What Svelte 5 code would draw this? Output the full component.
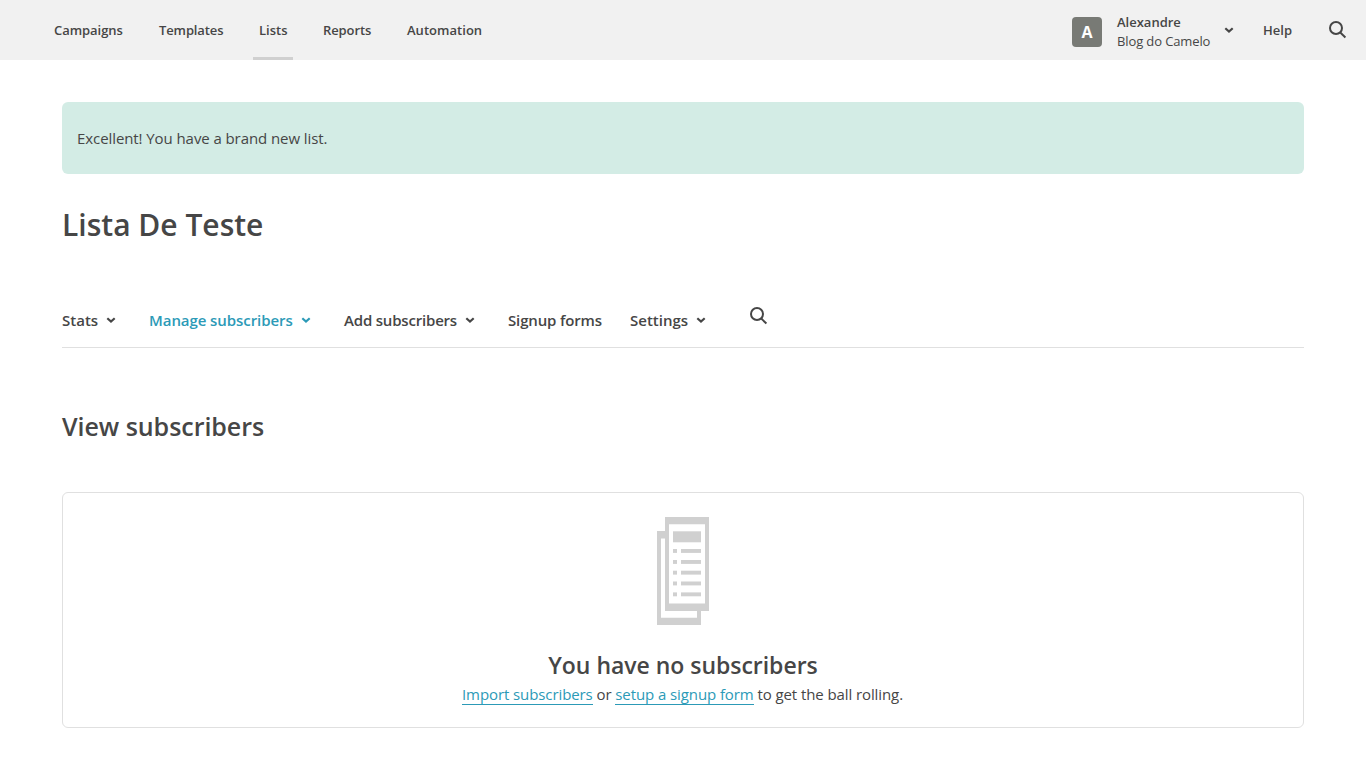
<script>
  const mainNav = [
    { label: 'Campaigns', width: 69, track: -0.05 },
    { label: 'Templates', width: 64, track: -0.12 },
    { label: 'Lists', width: 28, track: 0, active: true },
    { label: 'Reports', width: 48, track: -0.1 },
    { label: 'Automation', width: 75, track: 0.03 }
  ];
  const tabs = [
    { label: 'Stats', width: 36, gap: 33, track: 0, menu: true },
    { label: 'Manage subscribers', width: 144, gap: 33, track: -0.07, menu: true, active: true },
    { label: 'Add subscribers', width: 113, gap: 33, track: -0.19, menu: true },
    { label: 'Signup forms', width: 94, gap: 28, track: -0.15 },
    { label: 'Settings', width: 58, gap: 43, track: 0, menu: true }
  ];
  const rows = [32, 43, 53.7, 64.5, 75.4];
</script>

{#snippet chevron()}
  <svg class="chevron" width="10" height="8" viewBox="0 0 10 8"><path d="M1.3 2.2 L5 5.5 L8.7 2.2" /></svg>
{/snippet}

{#snippet magnifier()}
  <svg class="magnifier" width="20" height="20" viewBox="0 0 20 20">
    <circle cx="8" cy="8" r="6" /><path d="M12.3 12.6 L17.4 17.4" />
  </svg>
{/snippet}

<header>
  <nav class="main-nav">
    {#each mainNav as item}
      <a href="#top" class:active={item.active}><span style="width: {item.width}px; letter-spacing: {item.track}px">{item.label}</span></a>
    {/each}
  </nav>
  <div class="account">
    <div class="avatar">A</div>
    <div class="names"><strong>Alexandre</strong><span>Blog do Camelo</span></div>
    {@render chevron()}
    <a class="help" href="#help">Help</a>
    {@render magnifier()}
  </div>
</header>

<main>
  <div class="notice">Excellent! You have a brand new list.</div>
  <h1>Lista De Teste</h1>
  <nav class="tabs">
    {#each tabs as tab}
      <a href="#tab" class:active={tab.active} style="margin-right: {tab.gap}px">
        <span style="width: {tab.width}px; letter-spacing: {tab.track}px">{tab.label}</span>
        {#if tab.menu}{@render chevron()}{/if}
      </a>
    {/each}
    {@render magnifier()}
  </nav>
  <h2>View subscribers</h2>
  <section class="empty">
    <svg class="pages" width="52" height="108" viewBox="0 0 52 108" fill="#d0d0d0">
      <path d="M0 14 H8 V21.5 H4 V100.8 H40 V94 H44 V108 H0 Z" />
      <path fill-rule="evenodd" d="M8 0 H52 V94 H8 Z M12 7.2 V86.4 H48 V7.2 Z" />
      <rect x="16" y="14.3" width="28" height="11" />
      {#each rows as y}
        <rect x="16" {y} width="4" height="3.9" />
        <rect x="24" {y} width="20" height="3.9" />
      {/each}
    </svg>
    <h3>You have no subscribers</h3>
    <p><a href="#import">Import subscribers</a> or <a href="#form">setup a signup form</a> to get the ball rolling.</p>
  </section>
</main>

<style>
  :global(body) { margin: 0; background: #fff; overflow: hidden; }
  header, main { font-family: "Open Sans", sans-serif; color: #464646; }
  a { color: inherit; text-decoration: none; }
  header {
    box-sizing: border-box; height: 60px; background: #f1f1f1;
    display: flex; justify-content: space-between; padding: 0 18px 0 48px;
    font-size: 13px; font-weight: 600;
  }
  .main-nav { display: flex; gap: 24px; }
  .main-nav a { box-sizing: border-box; height: 60px; padding: 0 6px; line-height: 60px; border-bottom: 3px solid transparent; }
  .main-nav a.active { border-color: #d0d0d0; }
  .main-nav span, .tabs span { display: inline-block; white-space: nowrap; }
  .account { display: flex; align-items: center; height: 60px; }
  .avatar {
    width: 30px; height: 30px; margin: 4px 15px 0 0; border-radius: 4px;
    background: #787a75; color: #fff; font-size: 16px; font-weight: 700;
    line-height: 30px; text-align: center;
  }
  .names { display: flex; flex-direction: column; width: 93px; margin: 4px 14px 0 0; line-height: 19px; white-space: nowrap; }
  .names strong { font-weight: 600; }
  .names span { font-weight: 400; letter-spacing: -0.12px; }
  .help { width: 29px; margin: 0 36px 0 29px; }
  svg { display: block; flex: none; }
  .chevron, .magnifier { fill: none; stroke: currentColor; stroke-width: 2; }
  .chevron { stroke-width: 2.2; }
  main { padding: 42px 62px 0; }
  .notice { box-sizing: border-box; height: 72px; padding-left: 15px; border-radius: 6px; background: #d3ece5; font-size: 15px; line-height: 73px; letter-spacing: -0.08px; }
  h1, h2, h3, p { margin: 0; }
  h1 { margin-top: 27px; font-size: 30px; line-height: 48px; font-weight: 600; }
  .tabs { box-sizing: border-box; height: 48px; margin-top: 51px; border-bottom: 1px solid #e0e0e0; display: flex; font-size: 15px; font-weight: 600; }
  .tabs a { display: flex; align-items: center; gap: 8px; height: 40px; }
  .tabs .magnifier { margin-top: 6px; }
  .tabs a.active { color: #2c9ab7; }
  h2 { margin-top: 58px; font-size: 25px; line-height: 40px; font-weight: 600; letter-spacing: -0.04px; }
  .empty { box-sizing: border-box; height: 236px; margin-top: 46px; padding-top: 24px; border: 1px solid #e0e0e0; border-radius: 6px; display: flex; flex-direction: column; align-items: center; }
  h3 { margin-top: 24px; font-size: 23px; line-height: 32px; font-weight: 600; letter-spacing: -0.03px; }
  p { font-size: 15px; line-height: 24px; margin: 1px 1px 0 0; white-space: nowrap; letter-spacing: -0.09px; }
  p a { display: inline-block; line-height: 20px; border-bottom: 1px solid #2c9ab7; color: #2c9ab7; }
</style>
